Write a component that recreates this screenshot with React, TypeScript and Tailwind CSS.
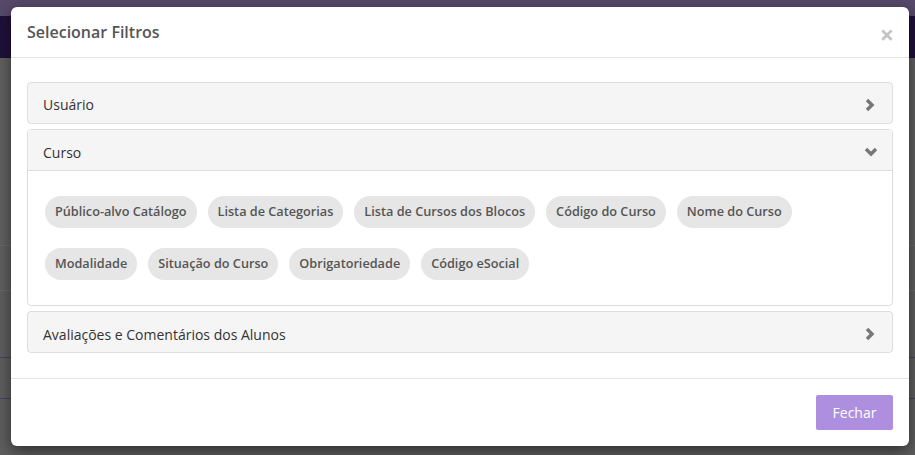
import React from "react";

const chipsRow1 = [
  "Público-alvo Catálogo",
  "Lista de Categorias",
  "Lista de Cursos dos Blocos",
  "Código do Curso",
  "Nome do Curso",
];
const chipsRow2 = ["Modalidade", "Situação do Curso", "Obrigatoriedade", "Código eSocial"];

function ChevronRight() {
  return (
    <svg width="12" height="14" viewBox="0 0 12 14" className="block">
      <polyline points="3,2 8,7 3,12" fill="none" stroke="#777" strokeWidth="3.4" strokeLinecap="butt" strokeLinejoin="miter" />
    </svg>
  );
}

function ChevronDown() {
  return (
    <svg width="14" height="12" viewBox="0 0 14 12" className="block">
      <polyline points="2,3 7,8 12,3" fill="none" stroke="#777" strokeWidth="3.4" strokeLinecap="butt" strokeLinejoin="miter" />
    </svg>
  );
}

function Chip({ label }: { label: string }) {
  return (
    <span className="inline-flex h-[32px] items-center rounded-full bg-[#e6e6e6] px-[10px] text-[12.7px] font-semibold text-[#555]">
      {label}
    </span>
  );
}

export default function App() {
  return (
    <div
      className="relative h-[455px] w-[915px] overflow-hidden bg-[#5e5e5e]"
      style={{ fontFamily: '"Open Sans", "Noto Sans", sans-serif' }}
    >
      {/* background page (dimmed) */}
      <div className="h-[16px] bg-[#56496a]" />
      <div className="h-[42px] bg-[#20103a]" />
      <div className="h-[187px] bg-[#616161]" />
      <div className="h-px bg-[#6a6a6a]" />
      <div className="h-[44px] bg-[#5f5f5f]" />
      <div className="h-px bg-[#6a6a6a]" />
      <div className="h-[66px] bg-[#5e5e5e]" />
      <div className="h-px bg-[#4a3f63]" />
      <div className="h-[40px] bg-[#5e5e5e]" />
      <div className="h-px bg-[#4a3f63]" />
      <div className="h-[57px] bg-[#5e5e5e]" />

      {/* modal */}
      <div className="absolute left-[11px] top-[7px] flex h-[439px] w-[898px] flex-col rounded-[6px] bg-white shadow-[0_5px_15px_rgba(0,0,0,0.5)]">
        <div className="flex h-[51px] items-center justify-between border-b border-[#e5e5e5] px-4">
          <span className="text-[16px] font-semibold text-[#555]">Selecionar Filtros</span>
          <span className="mr-[-1px] mt-[4px] text-[25px] font-bold leading-none text-[#c4c4c4]">×</span>
        </div>

        <div className="flex flex-1 flex-col gap-[5px] px-4 pt-[24px]">
          <div className="flex h-[42px] items-center justify-between rounded-[4px] border border-[#ddd] bg-[#f5f5f5] pl-[15px] pr-[16px] pt-[3px]">
            <span className="text-[14px] text-[#333]">Usuário</span>
            <ChevronRight />
          </div>

          <div className="rounded-[4px] border border-[#ddd]">
            <div className="flex h-[41px] items-center justify-between border-b border-[#ddd] bg-[#f5f5f5] pl-[15px] pr-[14px] pt-[4px]">
              <span className="text-[14px] text-[#333]">Curso</span>
              <ChevronDown />
            </div>
            <div className="flex flex-col gap-[20px] px-[17px] py-[25px]">
              <div className="flex gap-[11px]">
                {chipsRow1.map((c) => (
                  <Chip key={c} label={c} />
                ))}
              </div>
              <div className="flex gap-[11px]">
                {chipsRow2.map((c) => (
                  <Chip key={c} label={c} />
                ))}
              </div>
            </div>
          </div>

          <div className="flex h-[42px] items-center justify-between rounded-[4px] border border-[#ddd] bg-[#f5f5f5] pl-[15px] pr-[16px] pt-[4px]">
            <span className="text-[14px] text-[#333]">Avaliações e Comentários dos Alunos</span>
            <ChevronRight />
          </div>
        </div>

        <div className="flex h-[68px] items-start justify-end border-t border-[#e5e5e5] px-4 pt-[16px]">
          <button className="h-[35px] w-[77px] rounded-[2px] bg-[#ae8fdf] text-[14px] text-white">Fechar</button>
        </div>
      </div>
    </div>
  );
}
